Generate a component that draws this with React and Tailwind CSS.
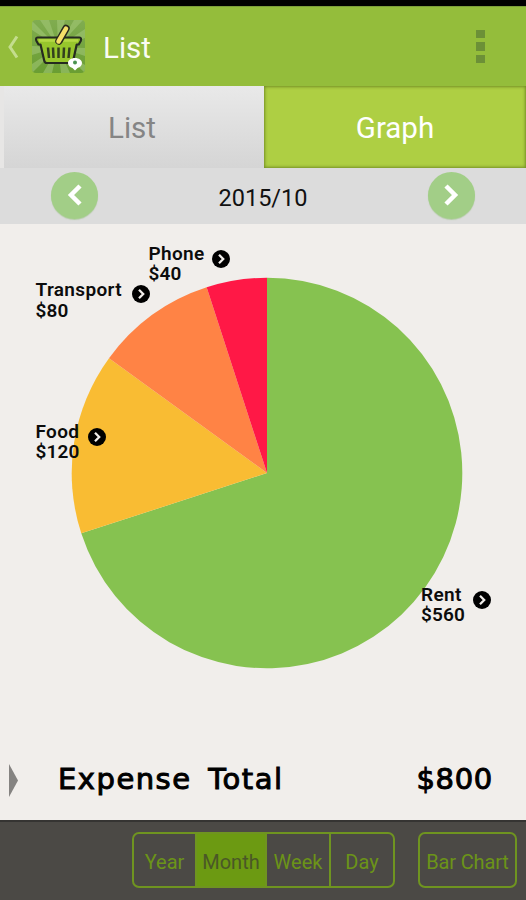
import { useState } from "react";

// Expense data, in clockwise order from 12 o'clock
const EXPENSES = [
  { name: "Rent", amount: 560, color: "#86c250" },
  { name: "Food", amount: 120, color: "#f9bc33" },
  { name: "Transport", amount: 80, color: "#ff8345" },
  { name: "Phone", amount: 40, color: "#ff1846" },
];

const RANGES = [
  { name: "Year", width: "w-[63px]" },
  { name: "Month", width: "w-[70px]" },
  { name: "Week", width: "w-[64px]" },
  { name: "Day", width: "w-[62px]" },
];

function BasketIcon() {
  return (
    <svg width="53" height="53" viewBox="0 0 53 53">
      <defs>
        <clipPath id="tile">
          <rect width="53" height="53" rx="4" />
        </clipPath>
        <linearGradient id="shade" x1="0" y1="0" x2="0" y2="1">
          <stop offset="0" stopColor="#80ac50" />
          <stop offset="1" stopColor="#6a9e32" />
        </linearGradient>
      </defs>
      <g clipPath="url(#tile)">
        <rect width="53" height="53" fill="url(#shade)" />
        {/* sun rays */}
        <path
          d="M26 27 0 10V1ZM26 27 8 0h9ZM26 27 25 0h8ZM26 27 42 0h9ZM26 27 53 9v9ZM26 27 53 28v8ZM26 27 53 45v8ZM26 27 38 53H29ZM26 27 20 53H11ZM26 27 0 53V44ZM26 27 0 35V26Z"
          fill="#a4c878"
          opacity="0.55"
        />
      </g>
      <path d="M5.500 17.500h42c1.500 0 2 1.500 1.200 3.500l-2 3.500h-2l-3.500 16c-.4 1.700-1 2.500-2.500 2.500h-24c-1.500 0-2.100-.8-2.500-2.500L8.500 24.500h-2l-2-3.500c-.8-2-.5-3.500 1-3.500Z" fill="#97c62c" stroke="#252b20" strokeWidth="2.200" strokeLinejoin="round" />
      <path d="M7 20.500h39" stroke="#b4d944" strokeWidth="2.500" />
      <path d="M16 27.500 17 38M21 27.500l.5 10.500M26.500 27.500V38M32 27.500 31.500 38M37.500 27.500 36.500 38" stroke="#33401e" strokeWidth="2.500" />
      <path d="M27 21 34 8.500" stroke="#28291d" strokeWidth="7.500" strokeLinecap="round" />
      <path d="M26.500 21.500 34 8.700" stroke="#f5df69" strokeWidth="4.500" strokeLinecap="round" />
      <path d="M43 38c4 0 7 2.200 7 5s-2 4.200-4.500 5L43 50.500 40.500 48C38 47.200 36 45.800 36 43s3-5 7-5Z" fill="#fff" />
      <circle cx="43" cy="42.500" r="2" fill="#4b9250" />
    </svg>
  );
}

function RoundArrow({ left, onClick }) {
  return (
    <button
      onClick={onClick}
      className="flex size-[47px] items-center justify-center rounded-full bg-[#a2ce87] shadow-[0_1px_1px_#b5cca8]"
    >
      <svg width="20" height="24" viewBox="0 0 20 24" className={left ? "rotate-180" : ""}>
        <path d="m5 3 9 9-9 9" fill="none" stroke="#fff" strokeWidth="4.500" />
      </svg>
    </button>
  );
}

function PieChart() {
  const total = EXPENSES.reduce((sum, item) => sum + item.amount, 0);
  const r = 195.3;

  // Point on the circle for a share of the total
  const point = (share) => {
    const a = share * 2 * Math.PI;
    return `${r * Math.sin(a)} ${-r * Math.cos(a)}`;
  };

  let start = 0;
  return (
    <svg width="392" height="392" viewBox="-196 -196 392 392">
      {EXPENSES.map((item) => {
        const from = start / total;
        start += item.amount;
        const to = start / total;
        const large = to - from > 0.5 ? 1 : 0;
        return (
          <path
            key={item.name}
            d={`M0 0L${point(from)}A${r} ${r} 0 ${large} 1 ${point(to)}Z`}
            fill={item.color}
          />
        );
      })}
    </svg>
  );
}

// Name and amount next to a slice, with a small link badge
function SliceLabel({ index, className, leading }) {
  const item = EXPENSES[index];
  return (
    <div className={`absolute flex items-start ${className}`}>
      <div className={`text-[19px] font-semibold tracking-[0.35px] text-[#0c0c0c] ${leading}`}>
        <p>{item.name}</p>
        <p className="tracking-[0.1px]">${item.amount}</p>
      </div>
      <svg width="18" height="18" viewBox="0 0 18 18" className="mt-[6px]">
        <circle cx="9" cy="9" r="9" fill="#000" />
        <path d="m7 4.800 4.200 4.200L7 13.200" fill="none" stroke="#f1eeeb" strokeWidth="2.300" />
      </svg>
    </div>
  );
}

export default function App() {
  const [range, setRange] = useState("Month");
  const [month, setMonth] = useState(10);

  return (
    <div className="flex h-[900px] w-[526px] flex-col overflow-hidden bg-[#f1eeeb] font-[Roboto,sans-serif]">
      {/* Action bar */}
      <div className="h-[6px] bg-black" />
      <header className="flex h-20 items-center border-t border-[#7c9e3a] bg-[#94bd3b] pr-[41px] pl-[7px]">
        <svg width="12" height="24" viewBox="0 0 12 24">
          <path d="M10 1.500 3 12l7 10.500" fill="none" stroke="#c4dd8e" strokeWidth="3" />
        </svg>
        <div className="ml-[13px]">
          <BasketIcon />
        </div>
        <h1 className="ml-[18px] pt-[4px] text-[29.5px] leading-none text-[#fafcf2]">List</h1>
        <div className="ml-auto flex flex-col gap-[4px]">
          <span className="h-[8.400px] w-[9px] bg-[#6c9037]" />
          <span className="h-[8.400px] w-[9px] bg-[#6c9037]" />
          <span className="h-[8.400px] w-[9px] bg-[#6c9037]" />
        </div>
      </header>

      {/* Tabs */}
      <nav className="flex h-[82px] text-[29.5px]">
        <button className="w-[264px] border-l-4 border-[#e7e6e5] bg-linear-to-b from-[#e9e9e9] to-[#d5d5d5] pt-[3px] pr-1 text-[#858585]">
          List
        </button>
        <button className="flex-1 bg-[#aecf43] pt-[3px] text-white shadow-[inset_0_0_3px_1px_#748f25]">
          Graph
        </button>
      </nav>

      {/* Month picker */}
      <div className="flex h-14 items-center justify-between bg-[#dcdcdc] pr-[51px] pb-[2px] pl-[51px]">
        <RoundArrow left onClick={() => setMonth(Math.max(1, month - 1))} />
        <span className="pt-[7px] text-[23.5px] text-[#111]">2015/{month}</span>
        <RoundArrow onClick={() => setMonth(Math.min(12, month + 1))} />
      </div>

      {/* Chart */}
      <main className="relative h-[516px] pt-[53px] pl-[71px]">
        <PieChart />
        <SliceLabel index={3} className="top-[20px] left-[148.500px] gap-[7px]" leading="leading-[20px]" />
        <SliceLabel index={2} className="top-[55px] left-[35.500px] gap-[10px]" leading="leading-[21px]" />
        <SliceLabel index={1} className="top-[198px] left-[35.500px] gap-[9px]" leading="leading-[20px]" />
        <SliceLabel index={0} className="top-[361px] left-[421px] gap-[8px]" leading="leading-[20px]" />
      </main>

      {/* Total row */}
      <div className="flex h-20 items-center pr-[33px] pl-[9px] font-['DejaVu_Sans',sans-serif] text-[29px] text-black [-webkit-text-stroke:1px_#000]">
        <svg width="9" height="33" viewBox="0 0 9 33">
          <path d="M0 0 9 16.500 0 33Z" fill="#858381" />
        </svg>
        <span className="ml-[40px] pb-px tracking-[1.500px] [word-spacing:6px]">Expense Total</span>
        <span className="ml-auto pb-px tracking-[0.7px]">$800</span>
      </div>

      {/* Bottom bar */}
      <footer className="flex h-20 items-start border-t-2 border-[#353432] bg-[#4b4945] pt-[10px] pl-[132px] text-[20px] text-[#6b9418]">
        <div className="flex h-14 overflow-hidden rounded-[7px] border-2 border-[#6f9420]">
          {RANGES.map((item) => (
            <button
              key={item.name}
              onClick={() => setRange(item.name)}
              className={`${item.width} border-r-2 border-[#6f9420] pt-[3px] last:border-r-0 ${
                range === item.name ? "bg-[#6c9a12] text-[#4a5727]" : ""
              }`}
            >
              {item.name}
            </button>
          ))}
        </div>
        <button className="ml-[23px] h-14 w-[99px] rounded-[7px] border-2 border-[#6f9420] pt-[3px] whitespace-nowrap">
          <span className="-mx-2 tracking-[-0.150px]">Bar Chart</span>
        </button>
      </footer>
    </div>
  );
}
